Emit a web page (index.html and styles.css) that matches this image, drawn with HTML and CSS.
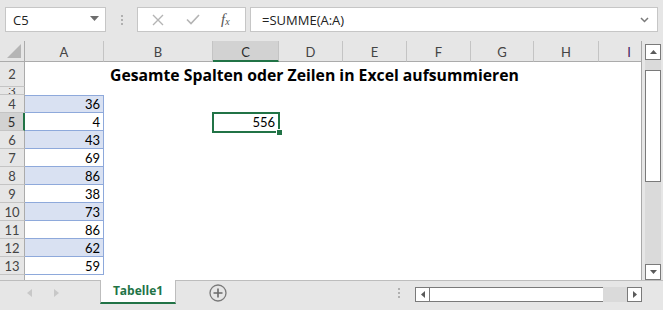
FILE: index.html
```html
<!DOCTYPE html>
<html lang="de">
<head>
<meta charset="utf-8">
<title>Excel</title>
<link rel="stylesheet" href="styles.css">
</head>
<body>
<div class="app">
  <div class="fbar">
    <div class="namebox"><span>C5</span><svg class="dd" width="9" height="5" viewBox="0 0 9 5"><path d="M0 0H9L4.5 5Z" fill="#6d6d6d"/></svg></div>
    <div class="grip"><i></i><i></i><i></i></div>
    <div class="fbtns">
      <svg class="fi" width="12" height="12" viewBox="0 0 12 12"><path d="M1 1L11 11M11 1L1 11" stroke="#b4b4b4" stroke-width="1.4" fill="none"/></svg>
      <svg class="fi" width="14" height="11" viewBox="0 0 14 11"><path d="M1 5.5L5 9.5L13 1" stroke="#b4b4b4" stroke-width="1.6" fill="none"/></svg>
      <span class="fx">f<sub>x</sub></span>
    </div>
    <div class="finput"><span>=SUMME(A:A)</span><svg width="9" height="6" viewBox="0 0 9 6"><path d="M1 1L4.5 4.5L8 1" stroke="#7a7a7a" stroke-width="1.5" fill="none"/></svg></div>
  </div>
  <div class="main">
    <div class="sheet">
      <div class="corner"><svg width="14" height="14" viewBox="0 0 14 14"><path d="M14 0V14H0Z" fill="#b5b5b5"/></svg></div>
      <div class="ch">A</div>
      <div class="ch">B</div>
      <div class="ch sel">C</div>
      <div class="ch">D</div>
      <div class="ch">E</div>
      <div class="ch">F</div>
      <div class="ch">G</div>
      <div class="ch">H</div>
      <div class="ch last">I</div>

      <div class="rh r2">2</div>
      <div class="title">Gesamte Spalten oder Zeilen in Excel aufsummieren</div>
      <div class="rh r3"><span>3</span></div>

      <div class="rh">4</div><div class="ca band first">36</div><div class="row-rest"></div>
      <div class="rh sel">5</div><div class="ca">4</div><div class="gap"></div><div class="cc"><span>556</span><div class="selbox"><i class="handle"></i></div></div><div class="row-rest2"></div>
      <div class="rh">6</div><div class="ca band">43</div><div class="row-rest"></div>
      <div class="rh">7</div><div class="ca">69</div><div class="row-rest"></div>
      <div class="rh">8</div><div class="ca band">86</div><div class="row-rest"></div>
      <div class="rh">9</div><div class="ca">38</div><div class="row-rest"></div>
      <div class="rh">10</div><div class="ca band">73</div><div class="row-rest"></div>
      <div class="rh">11</div><div class="ca">86</div><div class="row-rest"></div>
      <div class="rh">12</div><div class="ca band">62</div><div class="row-rest"></div>
      <div class="rh">13</div><div class="ca">59</div><div class="row-rest"></div>
      <div class="rh filler"></div>
    </div>
    <div class="vscroll">
      <div class="sbtn"><svg width="7" height="4" viewBox="0 0 7 4"><path d="M0 4H7L3.5 0Z" fill="#5a5a5a"/></svg></div>
      <div class="vtrack"><div class="vthumb"></div></div>
      <div class="sbtn"><svg width="7" height="4" viewBox="0 0 7 4"><path d="M0 0H7L3.5 4Z" fill="#5a5a5a"/></svg></div>
    </div>
  </div>
  <div class="tabbar">
    <div class="nav">
      <svg width="5" height="8" viewBox="0 0 5 8"><path d="M5 0V8L0 4Z" fill="#c8c8c8"/></svg>
      <svg width="5" height="8" viewBox="0 0 5 8"><path d="M0 0V8L5 4Z" fill="#c8c8c8"/></svg>
    </div>
    <div class="tab">Tabelle1</div>
    <div class="addsheet"><svg width="18" height="18" viewBox="0 0 18 18"><circle cx="9" cy="9" r="8" fill="none" stroke="#7a7a7a" stroke-width="1.3"/><path d="M9 4.5V13.5M4.5 9H13.5" stroke="#6a6a6a" stroke-width="1.6"/></svg></div>
    <div class="hgrip"><i></i><i></i><i></i></div>
    <div class="hscroll">
      <div class="hbtn"><svg width="4" height="7" viewBox="0 0 4 7"><path d="M4 0V7L0 3.5Z" fill="#5a5a5a"/></svg></div>
      <div class="hthumb"></div>
      <div class="htrack"></div>
      <div class="hbtn"><svg width="4" height="7" viewBox="0 0 4 7"><path d="M0 0V7L4 3.5Z" fill="#5a5a5a"/></svg></div>
    </div>
  </div>
</div>
</body>
</html>
```
FILE: styles.css
```css
* { box-sizing: border-box; }
html, body { margin: 0; padding: 0; }
body {
  width: 663px;
  height: 310px;
  overflow: hidden;
  background: #e6e6e6;
  font-family: Lato, "Liberation Sans", sans-serif;
  color: #000;
}
.app { width: 663px; height: 310px; display: flex; flex-direction: column; }

/* formula bar */
.fbar {
  height: 41px;
  display: flex;
  align-items: flex-start;
  padding: 7px 5px 0 5px;
}
.namebox {
  width: 101px;
  height: 25px;
  background: #fff;
  border: 1px solid #c6c6c6;
  display: flex;
  align-items: center;
  justify-content: space-between;
  padding: 0 6px 0 7px;
  font-family: "Open Sans", "Liberation Sans", sans-serif;
  font-size: 13px;
  color: #222;
}
.namebox .dd { margin-top: -3px; }
.grip {
  width: 31px;
  height: 25px;
  display: flex;
  flex-direction: column;
  align-items: center;
  justify-content: center;
  gap: 2px;
}
.grip i, .hgrip i { display: block; width: 2px; height: 2px; background: #b0b0b0; }
.fbtns {
  width: 109px;
  height: 25px;
  background: #fff;
  border: 1px solid #c6c6c6;
  display: flex;
  align-items: center;
  padding-left: 14px;
  gap: 22px;
}
.fx {
  font-family: "Liberation Serif", serif;
  font-style: italic;
  font-size: 15px;
  color: #555;
  margin-left: -1px;
  line-height: 1;
}
.fx sub { font-size: 10px; vertical-align: -1px; }
.finput {
  margin-left: 4px;
  width: 408px;
  height: 25px;
  background: #fff;
  border: 1px solid #c6c6c6;
  display: flex;
  align-items: center;
  justify-content: space-between;
  padding: 0 8px 0 11px;
  font-family: "Open Sans", "Liberation Sans", sans-serif;
  font-size: 13px;
  color: #222;
}

/* sheet */
.main { height: 239px; display: flex; }
.sheet {
  width: 642px;
  background: #fff;
  border-right: 1px solid #a8a8a8;
  display: grid;
  grid-template-columns: 25px 79px 109px 66px 64px 64px 64px 63px 65px 42px;
  grid-template-rows: 21px 25px 8px repeat(10, 18px) 1fr;
  overflow: hidden;
  font-size: 13px;
}
.corner, .ch, .rh {
  background: #e6e6e6;
  color: #444;
  font-size: 13px;
}
.corner {
  border-right: 1px solid #ababab;
  border-bottom: 1px solid #ababab;
  display: flex;
  align-items: flex-end;
  justify-content: flex-end;
  padding: 0 3px 3px 0;
}
.ch {
  border-right: 1px solid #c4c4c4;
  border-bottom: 1px solid #ababab;
  display: flex;
  align-items: center;
  justify-content: center;
  padding-top: 2px;
}
.ch.last { border-right: 0; justify-content: flex-end; padding-right: 10px; color: #4b1f5e; }
.ch.sel { background: #d2d2d2; border-bottom: 2px solid #217346; color: #2b2b2b; padding-top: 3px; }
.rh {
  grid-column: 1;
  border-right: 1px solid #ababab;
  border-bottom: 1px solid #c4c4c4;
  display: flex;
  align-items: center;
  justify-content: center;
  overflow: hidden;
}
.rh.r3 { align-items: flex-start; }
.rh.r3 span { display: block; line-height: 7px; height: 7px; overflow: hidden; margin-top: 1px; }
.rh.sel { background: #d2d2d2; border-right: 2px solid #217346; color: #2b2b2b; }
.rh.filler { border-bottom: 0; }
.title {
  grid-column: 3 / 11;
  grid-row: 2;
  font-family: "Open Sans", "Liberation Sans", sans-serif;
  font-weight: 700;
  font-size: 15.75px;
  white-space: nowrap;
  padding-left: 6px;
  display: flex;
  align-items: center;
  padding-top: 1px;
}
.ca {
  grid-column: 2;
  border: 1px solid #8ea9db;
  border-top: 0;
  border-left: 0;
  text-align: right;
  padding-right: 3px;
  line-height: 18px;
  background: #fff;
}
.ca.band { background: #d9e1f2; }
.ca.first { border-top: 1px solid #8ea9db; line-height: 16px; }
.row-rest { grid-column: 3 / 11; }
.gap { grid-column: 3; }
.cc {
  grid-column: 4;
  position: relative;
  text-align: right;
  padding-right: 4px;
  line-height: 18px;
}
.row-rest2 { grid-column: 5 / 11; }
.selbox {
  position: absolute;
  left: -1px;
  top: -1px;
  right: -1px;
  bottom: -2px;
  border: 2px solid #217346;
}
.handle {
  position: absolute;
  right: -5px;
  bottom: -5px;
  width: 7px;
  height: 7px;
  background: #217346;
  border: 1px solid #fff;
}

/* vertical scrollbar */
.vscroll {
  width: 21px;
  padding: 3px 2px 0 3px;
  display: flex;
  flex-direction: column;
}
.sbtn {
  height: 16px;
  background: #fff;
  border: 1px solid #7a7a7a;
  display: flex;
  align-items: center;
  justify-content: center;
}
.vtrack {
  flex: 1;
  background: #dadada;
  padding-top: 10px;
}
.vthumb {
  height: 112px;
  background: #fff;
  border: 1px solid #7a7a7a;
}

/* tab bar */
.tabbar {
  height: 30px;
  border-top: 1px solid #bdbdbd;
  display: flex;
  align-items: flex-start;
}
.nav {
  width: 100px;
  height: 24px;
  display: flex;
  align-items: center;
  gap: 22px;
  padding-left: 27px;
}
.tab {
  width: 76px;
  height: 24px;
  margin-top: -1px;
  background: #fff;
  border-left: 1px solid #bdbdbd;
  border-right: 1px solid #bdbdbd;
  border-bottom: 2px solid #217346;
  color: #217346;
  font-family: "Open Sans", "Liberation Sans", sans-serif;
  font-weight: 700;
  font-size: 12px;
  display: flex;
  align-items: center;
  justify-content: center;
  padding-bottom: 1px;
}
.addsheet {
  width: 84px;
  height: 24px;
  display: flex;
  align-items: center;
  padding-left: 33px;
}
.hgrip {
  width: 155px;
  height: 24px;
  display: flex;
  flex-direction: column;
  align-items: flex-end;
  justify-content: center;
  gap: 2px;
  padding-right: 15px;
}
.hscroll {
  margin-top: 6px;
  width: 227px;
  height: 15px;
  display: flex;
}
.hbtn {
  width: 15px;
  height: 15px;
  background: #fff;
  border: 1px solid #7a7a7a;
  display: flex;
  align-items: center;
  justify-content: center;
}
.hthumb {
  width: 173px;
  background: #fff;
  border: 1px solid #7a7a7a;
  border-left: 0;
  border-right: 0;
}
.htrack { flex: 1; background: #dadada; }
```
